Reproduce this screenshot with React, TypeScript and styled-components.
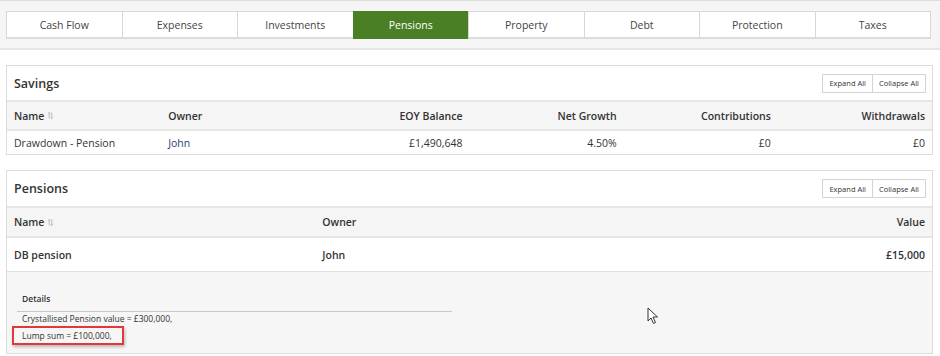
import React from 'react'
import styled, { createGlobalStyle } from 'styled-components'

const GlobalStyle = createGlobalStyle`
  html, body {
    margin: 0;
    padding: 0;
    background: #fff;
    font-family: 'Open Sans', 'Liberation Sans', sans-serif;
    color: #333;
  }
  * { box-sizing: border-box; }
`

const TABS = ['Cash Flow', 'Expenses', 'Investments', 'Pensions', 'Property', 'Debt', 'Protection', 'Taxes']
const ACTIVE_TAB = 'Pensions'

const Page = styled.div`
  position: relative;
  width: 940px;
  height: 356px;
  overflow: hidden;
`

const TabBar = styled.div`
  background: #f5f5f5;
  border-top: 1px solid #dedede;
  border-bottom: 2px solid #e6e6e6;
  padding: 10px 10px 9px 7px;
`

const Tabs = styled.div`
  display: grid;
  grid-template-columns: repeat(8, 1fr);
  width: 924px;
`

const Tab = styled.div<{ active?: boolean }>`
  height: 28px;
  display: flex;
  align-items: center;
  justify-content: center;
  font-size: 10.5px;
  border: 1px solid ${({ active }) => (active ? '#4b7f25' : '#d8d8d8')};
  border-bottom-width: 2px;
  border-bottom-color: ${({ active }) => (active ? '#4b7f25' : '#dcdcdc')};
  margin-left: -1px;
  background: ${({ active }) => (active ? '#4b7f25' : '#fff')};
  color: ${({ active }) => (active ? '#fff' : '#444')};
`

const Content = styled.div`
  padding: 15px 7px 0 6px;
`

const Panel = styled.div`
  border: 1px solid #dcdcdc;
  margin-bottom: 15px;
  background: #fff;
`

const PanelHeader = styled.div<{ height: number }>`
  height: ${({ height }) => height}px;
  display: flex;
  align-items: center;
  justify-content: space-between;
  padding: 0 6px 0 7px;
  border-bottom: 2px solid #e6e6e6;
`

const PanelTitle = styled.div`
  font-size: 12.5px;
  font-weight: 600;
  color: #333;
`

const ButtonGroup = styled.div`
  display: flex;
`

const SmallButton = styled.div`
  height: 19px;
  display: flex;
  align-items: center;
  padding: 0 6px;
  font-size: 7.5px;
  color: #333;
  border: 1px solid #d4d4d4;
  background: #fff;
  & + & { margin-left: -1px; }
`

const Row = styled.div<{ cols: number; head?: boolean; height: number; bold?: boolean }>`
  display: grid;
  grid-template-columns: repeat(${({ cols }) => cols}, 1fr);
  height: ${({ height }) => height}px;
  align-items: center;
  background: ${({ head }) => (head ? '#f5f5f5' : '#fff')};
  border-bottom: ${({ head }) => (head ? '2px solid #e6e6e6' : '0')};
  font-size: 10.5px;
  font-weight: ${({ head, bold }) => (head || bold ? 600 : 400)};
  color: #333;
`

const Cell = styled.div<{ right?: boolean; link?: boolean }>`
  padding: 0 7px;
  white-space: nowrap;
  color: ${({ link }) => (link ? '#26426e' : 'inherit')};
  display: flex;
  align-items: center;
  justify-content: ${({ right }) => (right ? 'flex-end' : 'flex-start')};
`

const SortIcon = styled.span`
  display: inline-flex;
  margin-left: 4px;
`

const DetailsArea = styled.div`
  background: #f6f6f6;
  border-top: 1px solid #e2e2e2;
  height: 82px;
  padding: 21px 0 0 10px;
`

const DetailsBox = styled.div`
  width: 435px;
`

const DetailsTitle = styled.div`
  font-size: 8.5px;
  font-weight: 600;
  padding: 0 0 7px 5px;
  border-bottom: 1px solid #c8c8c8;
`

const DetailsLine = styled.div`
  font-size: 8.5px;
  padding-left: 5px;
  margin-top: 1px;
  line-height: 12px;
`

const Highlight = styled.span`
  display: inline-block;
  margin-left: -10px;
  padding: 2px 10px 1px 8px;
  border: 2px solid #e2383c;
  box-shadow: 1px 2px 3px rgba(0, 0, 0, 0.25);
`

const Cursor = styled.svg`
  position: absolute;
  left: 647px;
  top: 307px;
`

const Sort = () => (
  <SortIcon>
    <svg width="5" height="7" viewBox="0 0 5 7">
      <path d="M1.2 0.5 V6.5 M0.2 1.5 L1.2 0.5 L2.2 1.5 M3.8 6.5 V0.5 M2.8 5.5 L3.8 6.5 L4.8 5.5" stroke="#aaa" strokeWidth="0.8" fill="none" />
    </svg>
  </SortIcon>
)

const PanelButtons = () => (
  <ButtonGroup>
    <SmallButton>Expand All</SmallButton>
    <SmallButton>Collapse All</SmallButton>
  </ButtonGroup>
)

const App = () => (
  <Page>
    <GlobalStyle />
    <TabBar>
      <Tabs>
        {TABS.map(t => (
          <Tab key={t} active={t === ACTIVE_TAB}>{t}</Tab>
        ))}
      </Tabs>
    </TabBar>
    <Content>
      <Panel>
        <PanelHeader height={36}>
          <PanelTitle>Savings</PanelTitle>
          <PanelButtons />
        </PanelHeader>
        <Row cols={6} head height={29}>
          <Cell>Name<Sort /></Cell>
          <Cell>Owner</Cell>
          <Cell right>EOY Balance</Cell>
          <Cell right>Net Growth</Cell>
          <Cell right>Contributions</Cell>
          <Cell right>Withdrawals</Cell>
        </Row>
        <Row cols={6} height={23}>
          <Cell>Drawdown - Pension</Cell>
          <Cell link>John</Cell>
          <Cell right>£1,490,648</Cell>
          <Cell right>4.50%</Cell>
          <Cell right>£0</Cell>
          <Cell right>£0</Cell>
        </Row>
      </Panel>
      <Panel>
        <PanelHeader height={37}>
          <PanelTitle>Pensions</PanelTitle>
          <PanelButtons />
        </PanelHeader>
        <Row cols={3} head height={30}>
          <Cell>Name<Sort /></Cell>
          <Cell>Owner</Cell>
          <Cell right>Value</Cell>
        </Row>
        <Row cols={3} height={33} bold>
          <Cell>DB pension</Cell>
          <Cell>John</Cell>
          <Cell right>£15,000</Cell>
        </Row>
        <DetailsArea>
          <DetailsBox>
            <DetailsTitle>Details</DetailsTitle>
            <DetailsLine>Crystallised Pension value = £300,000,</DetailsLine>
            <DetailsLine>
              <Highlight>Lump sum = £100,000,</Highlight>
            </DetailsLine>
          </DetailsBox>
        </DetailsArea>
      </Panel>
    </Content>
    <Cursor width="12" height="18" viewBox="0 0 12 18">
      <path d="M1 1 L1 14 L4 11 L6.5 16.5 L8.5 15.5 L6 10 L10.5 10 Z" fill="#fff" stroke="#333" strokeWidth="1" strokeLinejoin="round" />
    </Cursor>
  </Page>
)

export default App
